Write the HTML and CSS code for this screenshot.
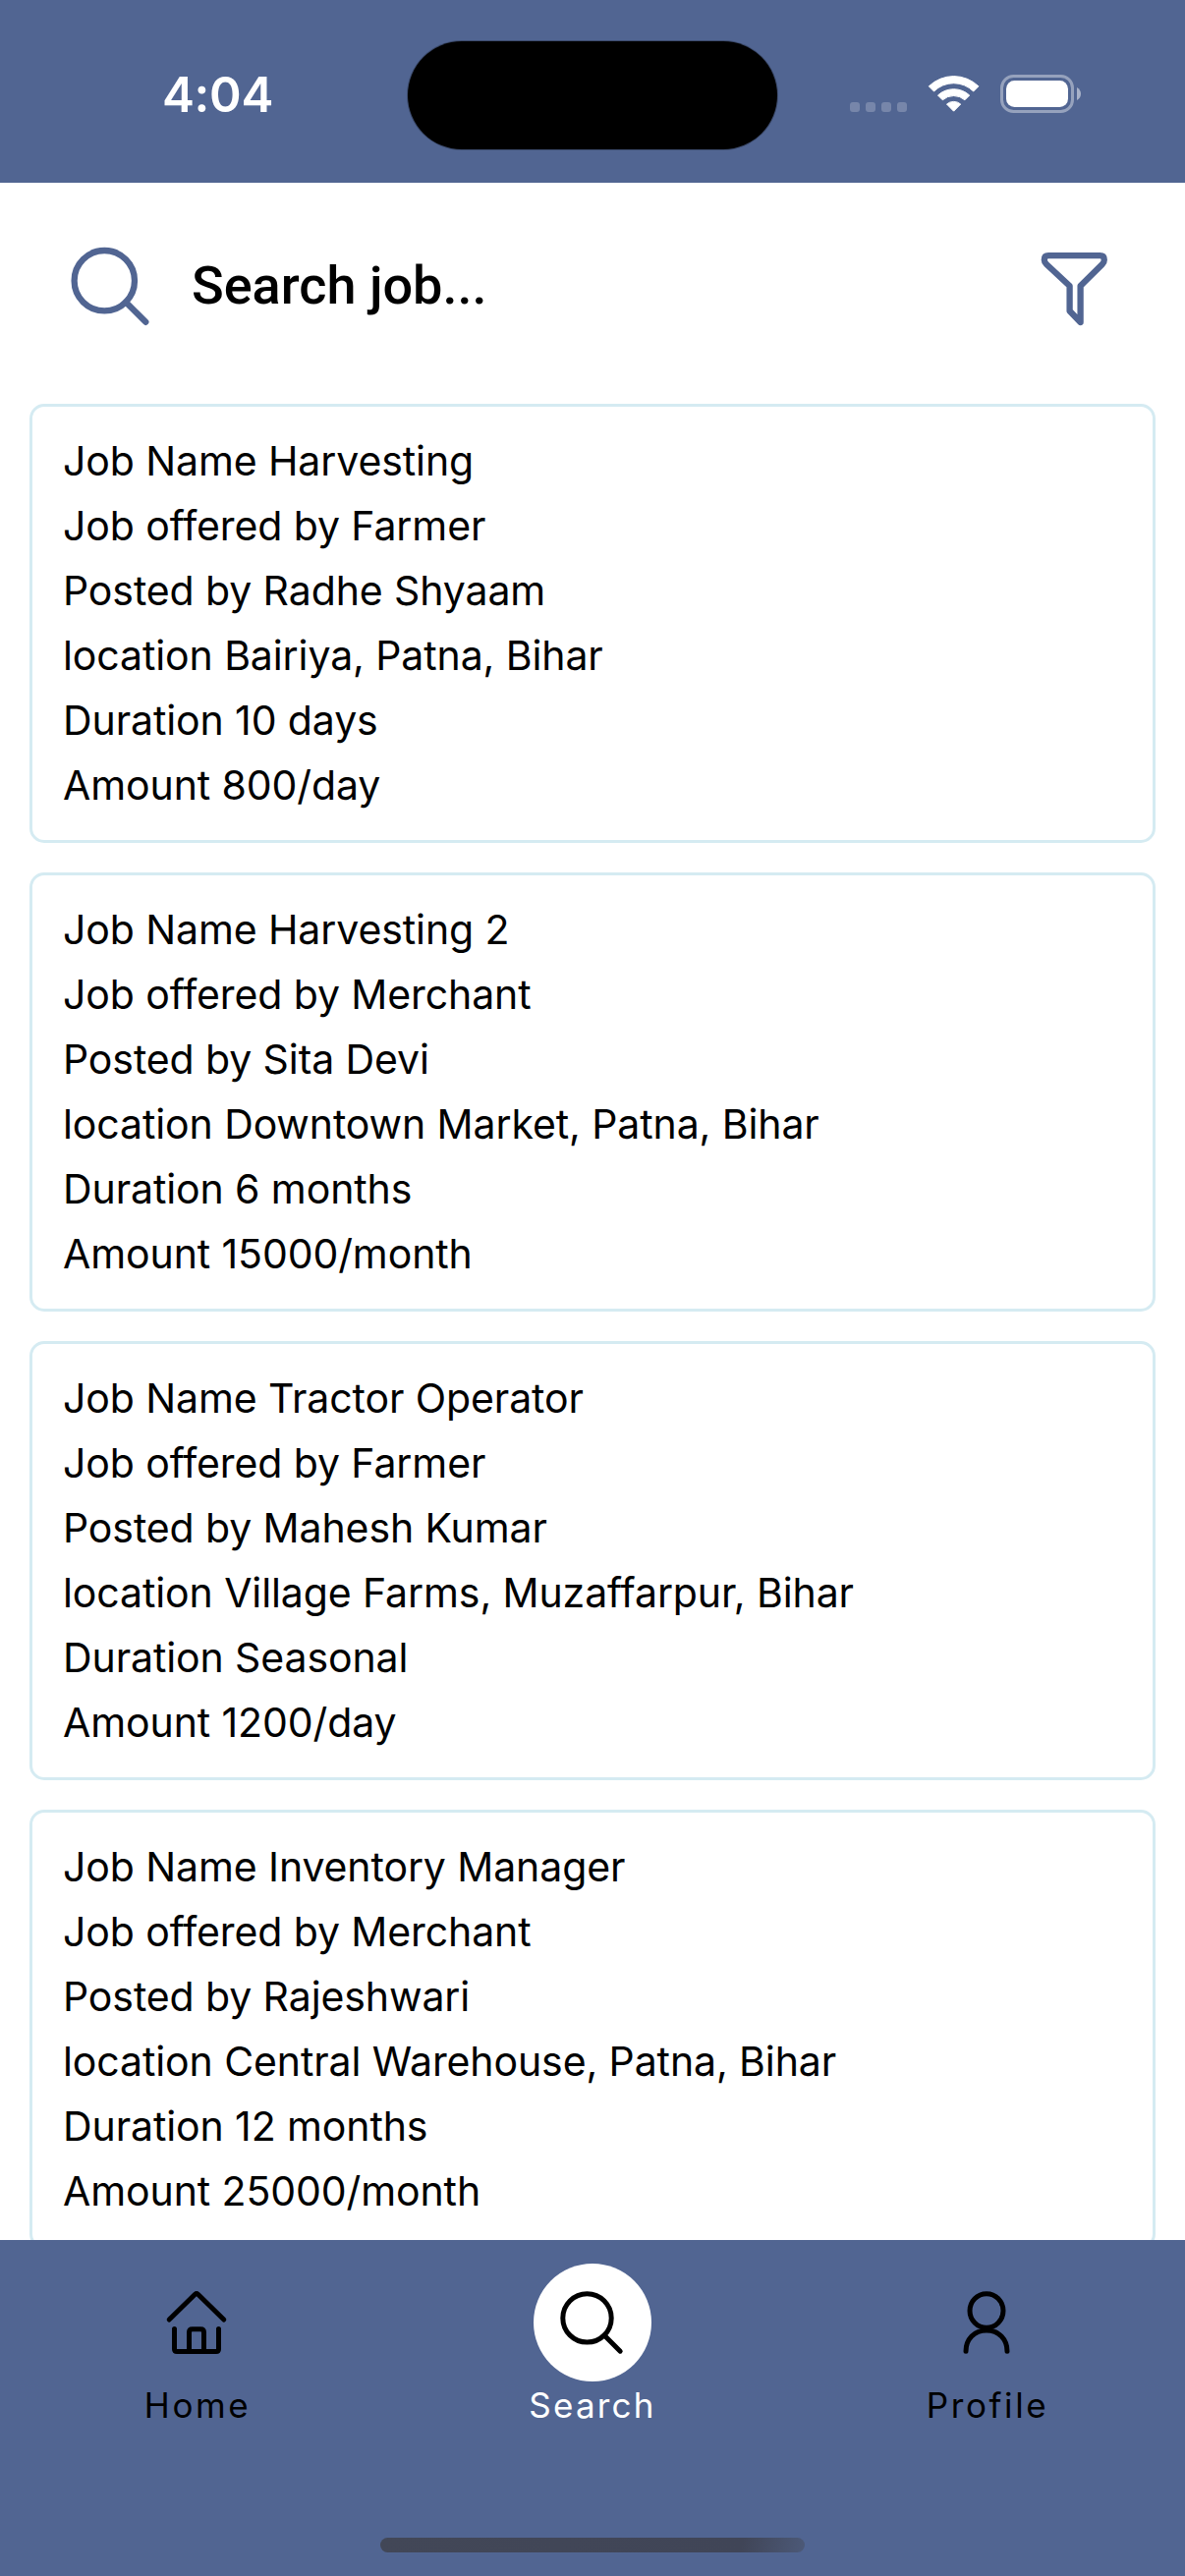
FILE: index.html
```html
<!DOCTYPE html>
<html lang="en">
<head>
<meta charset="utf-8">
<title>Search jobs</title>
<link rel="stylesheet" href="styles.css">
</head>
<body>
<div class="screen">
  <header class="status-bar">
    <div class="time">4:04</div>
    <div class="island"></div>
    <svg class="status-icons" viewBox="865 76 236 39" aria-hidden="true">
      <g fill="#fff" fill-opacity=".22">
        <rect x="865" y="104" width="10" height="10" rx="3"/>
        <rect x="881" y="104" width="10" height="10" rx="3"/>
        <rect x="897" y="104" width="10" height="10" rx="3"/>
        <rect x="913" y="104" width="10" height="10" rx="3"/>
      </g>
      <g fill="#fff" stroke="#fff" stroke-width="1" stroke-linejoin="round">
        <path d="M945.3 87.8A36.5 36.5 0 0 1 995.9 87.8L990.7 93A28.5 28.5 0 0 0 950.5 93Z"/>
        <path d="M954.5 97A23.8 23.8 0 0 1 986.7 97L981.9 101.8A17 17 0 0 0 959.3 101.8Z"/>
        <path d="M963.5 106A11 11 0 0 1 977.7 106L970.6 113.2Z"/>
      </g>
      <rect x="1019.5" y="77.5" width="72" height="36" rx="12" fill="none" stroke="#fff" stroke-opacity=".4" stroke-width="3"/>
      <rect x="1024" y="82" width="63" height="27" rx="8.5" fill="#fff"/>
      <path d="M1096 89Q1100 91.500 1100 95.500Q1100 99.500 1096 102Z" fill="#fff" fill-opacity=".5"/>
    </svg>
  </header>

  <div class="search-bar">
    <svg class="search-icon" viewBox="72 251 80 81" aria-hidden="true">
      <circle cx="106.300" cy="285.700" r="30.700"/>
      <path d="M128 307.500L148.300 327.800"/>
    </svg>
    <div class="search-text">Search job...</div>
    <svg class="filter-icon" viewBox="1059 256 69 76" aria-hidden="true">
      <path d="M1067 260.200H1119.500Q1123.800 260.200 1123.800 264.500Q1123.800 267 1121.800 269L1099.600 291V328L1088.600 316.500V291L1065 269Q1062.800 267 1062.800 264.500Q1062.800 260.200 1067 260.200Z"/>
    </svg>
  </div>

  <main class="jobs">
    <article class="job">
      <p>Job Name Harvesting</p>
      <p>Job offered by Farmer</p>
      <p>Posted by Radhe Shyaam</p>
      <p>location Bairiya, Patna, Bihar</p>
      <p>Duration 10 days</p>
      <p>Amount 800/day</p>
    </article>
    <article class="job">
      <p>Job Name Harvesting 2</p>
      <p>Job offered by Merchant</p>
      <p>Posted by Sita Devi</p>
      <p>location Downtown Market, Patna, Bihar</p>
      <p>Duration 6 months</p>
      <p>Amount 15000/month</p>
    </article>
    <article class="job">
      <p>Job Name Tractor Operator</p>
      <p>Job offered by Farmer</p>
      <p>Posted by Mahesh Kumar</p>
      <p>location Village Farms, Muzaffarpur, Bihar</p>
      <p>Duration Seasonal</p>
      <p>Amount 1200/day</p>
    </article>
    <article class="job">
      <p>Job Name Inventory Manager</p>
      <p>Job offered by Merchant</p>
      <p>Posted by Rajeshwari</p>
      <p>location Central Warehouse, Patna, Bihar</p>
      <p>Duration 12 months</p>
      <p>Amount 25000/month</p>
    </article>
  </main>

  <nav class="tab-bar">
    <div class="tabs">
      <div class="tab">
        <svg class="tab-icon" viewBox="141 2304 120 120" aria-hidden="true">
          <path d="M172.200 2361L198.500 2335.300Q200 2334 201.500 2335.300L227.800 2361"/>
          <path d="M177.500 2370.500V2391Q177.500 2393.500 180 2393.500H220Q222.500 2393.500 222.500 2391V2370.500"/>
          <path d="M192.500 2393.500V2374Q192.500 2370.800 195.700 2370.800H204.300Q207.500 2370.800 207.500 2374V2393.500"/>
        </svg>
        <span class="tab-label">Home</span>
      </div>
      <div class="tab active">
        <svg class="tab-icon" viewBox="543 2304 120 120" aria-hidden="true">
          <circle cx="597.500" cy="2359.400" r="24.700"/>
          <path d="M615 2377L631.200 2393.200"/>
        </svg>
        <span class="tab-label">Search</span>
      </div>
      <div class="tab">
        <svg class="tab-icon" viewBox="945 2304 120 120" aria-hidden="true">
          <ellipse cx="1004" cy="2352" rx="17" ry="17.300"/>
          <path d="M983 2393.200C983 2381 991.500 2372 1004 2372S1025 2381 1025 2393.200"/>
        </svg>
        <span class="tab-label">Profile</span>
      </div>
    </div>
    <div class="home-indicator"></div>
  </nav>
</div>
</body>
</html>
```
FILE: styles.css
```css
* {
  box-sizing: border-box;
}

body {
  margin: 0;
  background: #fff;
  color: #000;
  font-family: Inter, "Liberation Sans", sans-serif;
}

.screen {
  width: 1206px;
  height: 2622px;
  display: flex;
  flex-direction: column;
  overflow: hidden;
}

/* Status bar */
.status-bar {
  flex: none;
  height: 186px;
  padding: 42px 105px 0 0;
  display: flex;
  align-items: flex-start;
  background: #516592;
}

.time {
  width: 415px;
  padding: 24px 0 0 28px;
  text-align: center;
  color: #fff;
  font-size: 49.5px;
  font-weight: 600;
  line-height: 60px;
  letter-spacing: -0.3px;
}

.island {
  width: 376px;
  height: 110px;
  border-radius: 55px;
  background: #000;
  box-shadow: 0 0 0 1px rgba(0, 0, 0, 0.25);
}

.status-icons {
  width: 236px;
  height: 39px;
  margin: 34px 0 0 auto;
}

/* Search row */
.search-bar {
  flex: none;
  height: 225px;
  padding: 65px 78px 0 72px;
  display: flex;
  align-items: flex-start;
}

.search-icon,
.filter-icon {
  fill: none;
  stroke: #516592;
  stroke-width: 6.3;
  stroke-linecap: round;
  stroke-linejoin: round;
}

.search-icon {
  width: 80px;
  height: 81px;
}

.filter-icon {
  width: 69px;
  height: 76px;
  margin: 5px 0 0 auto;
}

.search-text {
  margin: 8px 0 0 43px;
  font-family: Roboto, "Liberation Sans", sans-serif;
  font-size: 54px;
  font-weight: 500;
  line-height: 64px;
}

/* Job list */
.jobs {
  flex: 1;
  min-height: 0;
  padding: 0 30px;
  display: flex;
  flex-direction: column;
  gap: 30px;
  overflow: hidden;
}

.job {
  flex: none;
  height: 447px;
  padding: 22px 31px;
  border: 3px solid #d5ebf2;
  border-radius: 15px;
}

.job p {
  margin: 0;
  font-size: 41px;
  line-height: 66px;
  letter-spacing: -0.1px;
}

/* Bottom tabs */
.tab-bar {
  flex: none;
  height: 342px;
  padding: 24px 0;
  display: flex;
  flex-direction: column;
  justify-content: space-between;
  align-items: center;
  background: #516592;
}

.tabs {
  width: 100%;
  display: grid;
  grid-template-columns: repeat(3, 1fr);
}

.tab {
  display: flex;
  flex-direction: column;
  align-items: center;
}

.tab-icon {
  width: 120px;
  height: 120px;
  border-radius: 50%;
  fill: none;
  stroke: #000;
  stroke-width: 5;
  stroke-linecap: round;
  stroke-linejoin: round;
}

.active .tab-icon {
  background: #fff;
}

.tab-label {
  margin-top: 3px;
  font-size: 35px;
  line-height: 42px;
  letter-spacing: 2.6px;
}

.active .tab-label {
  color: #fff;
  letter-spacing: 2.2px;
}

.home-indicator {
  width: 432px;
  height: 15px;
  border-radius: 8px;
  background: linear-gradient(100deg, #424757 0%, #404557 85%, #4c5978 100%);
}
```
